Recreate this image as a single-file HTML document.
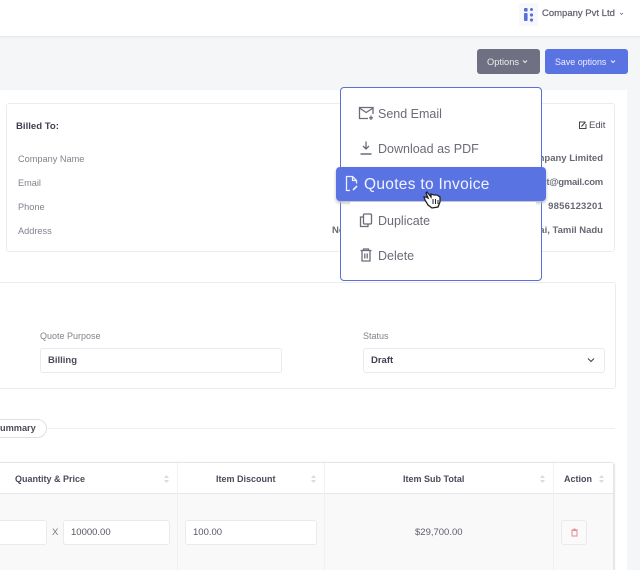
<!DOCTYPE html>
<html>
<head>
<meta charset="utf-8">
<style>
html,body{margin:0;padding:0;width:640px;height:570px;overflow:hidden}
#w{position:absolute;left:0;top:0;width:640px;height:570px;overflow:hidden;background:#f5f6f8;font-family:"Liberation Sans",sans-serif;color:#4b4d5c}
.a{position:absolute;white-space:nowrap}
.box{position:absolute;box-sizing:border-box}
.lab{font-size:9.2px;color:#80828c;line-height:12px}
.val{font-size:9.5px;color:#676973;font-weight:bold;line-height:12px;text-align:right;right:37px}
.th{font-size:9px;font-weight:bold;color:#4a4c5a;line-height:12px}
.inp{position:absolute;box-sizing:border-box;background:#fff;border:1px solid #e9eaed;border-radius:3px;height:25px;font-size:9.5px;line-height:24px;padding-left:7px;color:#555762}
.mi{position:absolute;left:378px;font-size:12.5px;line-height:16px;color:#6a6c76;white-space:nowrap}
svg{position:absolute;overflow:visible}
</style>
</head>
<body>
<div id="w">
<!-- top bar -->
<div class="box" style="left:0;top:0;width:640px;height:37px;background:#fff;border-bottom:1px solid #e8e9ec;box-shadow:0 1px 2px #eceef0"></div>
<div class="box" style="left:519px;top:3px;width:19px;height:23px;background:#f7f8fb"></div>
<svg style="left:0;top:0" width="640" height="40">
<g fill="#5a6fd8"><rect x="524" y="8" width="3.600" height="3.600" rx="1"/><rect x="530" y="8" width="3" height="3" rx="1.500"/><rect x="524" y="13" width="3.600" height="8" rx="1"/><circle cx="531.500" cy="15" r="1.600"/><circle cx="531.500" cy="20" r="1.600"/></g>
<path d="M620 13l1.500 1.500L623 13" fill="none" stroke="#8a8c95" stroke-width=".9"/>
</svg>
<div class="a" style="left:542px;top:8px;font-size:9.5px;line-height:12px;color:#62646e;-webkit-text-stroke:.25px #62646e">Company Pvt Ltd</div>

<!-- buttons -->
<div class="box" style="left:477px;top:49px;width:63px;height:25px;background:#6f7182;border-radius:3px"></div>
<div class="a" style="left:487px;top:56px;font-size:9.3px;line-height:12px;color:#eceded">Options</div>
<div class="box" style="left:545px;top:49px;width:83px;height:25px;background:#5a73e3;border-radius:3px"></div>
<div class="a" style="left:555px;top:56px;font-size:8.900px;line-height:12px;color:#eef0fc">Save options</div>
<svg style="left:0;top:0" width="640" height="80"><path d="M523 60.500l2 2 2-2" fill="none" stroke="#eee" stroke-width="1"/><path d="M611 60.500l2 2 2-2" fill="none" stroke="#eef" stroke-width="1"/></svg>

<!-- main card -->
<div class="box" style="left:0;top:90px;width:627px;height:480px;background:#fff"></div>

<!-- billed card -->
<div class="box" style="left:6px;top:103px;width:609px;height:149px;background:#fff;border:1px solid #ebecee;border-radius:3px"></div>
<div class="a" style="left:16px;top:121px;font-size:9.6px;font-weight:bold;line-height:12px;color:#3f4150">Billed To:</div>
<div class="a lab" style="left:18px;top:153px">Company Name</div>
<div class="a lab" style="left:18px;top:177px">Email</div>
<div class="a lab" style="left:18px;top:201px">Phone</div>
<div class="a lab" style="left:18px;top:225px">Address</div>
<svg style="left:0;top:0" width="640" height="140"><path d="M585 122h-5.500v6.500h6.500V124" fill="none" stroke="#444" stroke-width="1"/><path d="M581.500 126.500l4-4.500" fill="none" stroke="#444" stroke-width="1.200"/></svg>
<div class="a" style="left:589px;top:120px;font-size:9.5px;line-height:12px;color:#4a4c58">Edit</div>
<div class="a val" style="top:153px">Company Limited</div>
<div class="a val" style="top:177px;letter-spacing:-.25px">test@gmail.com</div>
<div class="a val" style="top:201px;letter-spacing:.2px">9856123201</div>
<div class="a val" style="top:225px">Chennai, Tamil Nadu</div>
<div class="a val" style="top:225px;right:auto;left:332px">No</div>

<!-- form card -->
<div class="box" style="left:-10px;top:282px;width:626px;height:107px;background:#fff;border:1px solid #ebecee;border-radius:3px"></div>
<div class="a lab" style="left:40px;top:330px;font-size:9px">Quote Purpose</div>
<div class="inp" style="left:40px;top:348px;width:242px;font-weight:bold;color:#4a4c58">Billing</div>
<div class="a lab" style="left:363px;top:330px;font-size:9px">Status</div>
<div class="inp" style="left:363px;top:348px;width:242px;font-weight:bold;color:#3f4150">Draft</div>
<svg style="left:0;top:0" width="640" height="380"><path d="M588 358.500l3 3 3-3" fill="none" stroke="#444" stroke-width="1.100"/></svg>

<!-- summary divider -->
<div class="box" style="left:40px;top:428px;width:575px;height:1px;background:#eeeff0"></div>
<div class="box" style="left:-20px;top:419px;width:67px;height:19px;background:#fff;border:1px solid #dfe0e3;border-radius:10px"></div>
<div class="a" style="left:0;top:422px;font-size:9.2px;font-weight:bold;line-height:13px;color:#4a4c58">ummary</div>

<!-- table -->
<div class="box" style="left:-10px;top:462px;width:624px;height:120px;background:#f9f9f9;border:1px solid #e4e5e8;border-radius:4px;box-shadow:1px 0 1px #e4e5e8"></div>
<div class="box" style="left:0;top:463px;width:613px;height:31px;background:#fff;border-bottom:1px solid #e6e7e9"></div>
<div class="box" style="left:177px;top:463px;width:1px;height:107px;background:#f1f1f2"></div>
<div class="box" style="left:324px;top:463px;width:1px;height:107px;background:#f1f1f2"></div>
<div class="box" style="left:553px;top:463px;width:1px;height:107px;background:#f1f1f2"></div>
<div class="a th" style="left:15px;top:473px">Quantity &amp; Price</div>
<div class="a th" style="left:216px;top:473px">Item Discount</div>
<div class="a th" style="left:403px;top:473px">Item Sub Total</div>
<div class="a th" style="left:564px;top:473px">Action</div>
<svg style="left:0;top:0" width="640" height="570">
<g fill="#d9dadd"><path d="M164 478l2.500-3 2.500 3zM164 480l2.500 3 2.500-3z"/><path d="M311 478l2.500-3 2.500 3zM311 480l2.500 3 2.500-3z"/><path d="M540 478l2.500-3 2.500 3zM540 480l2.500 3 2.500-3z"/><path d="M599 478l2.500-3 2.500 3zM599 480l2.500 3 2.500-3z"/></g>
</svg>
<div class="inp" style="left:-20px;top:520px;width:67px;border-radius:3px"></div>
<div class="a" style="left:52px;top:527px;font-size:9.5px;line-height:12px;color:#777">X</div>
<div class="inp" style="left:63px;top:520px;width:107px">10000.00</div>
<div class="inp" style="left:185px;top:520px;width:132px">100.00</div>
<div class="a" style="left:415px;top:527px;font-size:9.5px;line-height:12px;color:#5c5e68">$29,700.00</div>
<div class="box" style="left:561px;top:520px;width:26px;height:25px;background:#fafafa;border:1px solid #e9eaed;border-radius:3px"></div>
<svg style="left:0;top:0" width="640" height="570"><path d="M572 530.500h5v5.500h-5zM571.500 530h6M573.500 529h2" fill="none" stroke="#e58a92" stroke-width="1"/></svg>

<!-- dropdown -->
<div class="box" style="left:340px;top:87px;width:202px;height:194px;background:#fff;border:1px solid #5a6fd8;border-radius:4px"></div>
<svg style="left:0;top:0" width="640" height="290">
<g fill="none" stroke="#6a6c76" stroke-width="1.300">
<path d="M373 114v-6.500h-13.500v11h8.500"/><path d="M359.500 108l6.700 4.500 6.800-4.500"/><path d="M371 115.500v4.500M369 117.800h4"/>
<path d="M366 141.500v7.500M363 146l3 3 3-3"/><path d="M360.500 154h11" stroke-width="1.500"/>
<rect x="363.500" y="214" width="8" height="10" rx="1"/><path d="M363 217h-2.500v9.500h7.500v-2"/>
<path d="M360.500 250.500h11M363.500 250.500v-1.500h5v1.500M362 251v10h8v-10M364.800 253.500v5M367.200 253.500v5"/>
</g>
</svg>
<div class="mi" style="top:106px">Send Email</div>
<div class="mi" style="top:141px">Download as PDF</div>
<div class="mi" style="top:213px">Duplicate</div>
<div class="mi" style="top:248px">Delete</div>
<div class="box" style="left:336px;top:167px;width:210px;height:34px;background:#5a73e3;border-radius:4px;box-shadow:0 2px 3px #b9bac2"></div>
<div class="box" style="left:350px;top:202px;width:186px;height:3px;background:#fff"></div>
<svg style="left:0;top:0" width="640" height="220">
<path d="M350 190.500h-3.500v-14h6l4 4v3M352.500 176.500v4h4" fill="none" stroke="#eef0fc" stroke-width="1.300"/>
<path d="M353 190l4-4" stroke="#eef0fc" stroke-width="1.600"/>
<path d="M427 192l4 5 0-3 3 1 3 0 3 2 0 5-2 5-6 1-4-3-3-5-1-3 2 0 2 1-2-5z" fill="#fff" stroke="#222" stroke-width="1.300"/>
<path d="M433 199v5M435.500 199v5M438 200v4" stroke="#222" stroke-width="1"/>
</svg>
<div class="a" style="left:364px;top:176px;font-size:15.5px;line-height:18px;color:#f2f4fe;letter-spacing:.3px">Quotes to Invoice</div>
</div>
</body>
</html>
